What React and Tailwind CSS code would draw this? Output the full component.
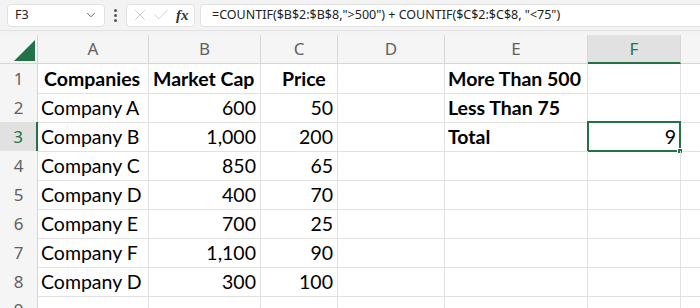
import React from "react";
import { ChevronDown, X, Check } from "lucide-react";

const cols = ["A", "B", "C", "D", "E", "F"];

const rows = [
  ["Companies", "Market Cap", "Price", "", "More Than 500", ""],
  ["Company A", "600", "50", "", "Less Than 75", ""],
  ["Company B", "1,000", "200", "", "Total", "9"],
  ["Company C", "850", "65", "", "", ""],
  ["Company D", "400", "70", "", "", ""],
  ["Company E", "700", "25", "", "", ""],
  ["Company F", "1,100", "90", "", "", ""],
  ["Company D", "300", "100", "", "", ""],
  ["", "", "", "", "", ""],
];

const gridCols = "grid grid-cols-[38px_111px_112px_77px_107px_143px_93px_1fr]";
const cellFont = { fontFamily: "Lato, 'Open Sans', sans-serif" };
const uiFont = { fontFamily: "'Noto Sans', 'Open Sans', sans-serif" };

const App = () => {
  return (
    <div className="w-[700px] h-[308px] overflow-hidden bg-white">
      {/* Formula bar */}
      <div className="h-[31px] bg-[#f3f3f3] flex items-center pl-[7px] gap-0 border-b border-[#e3e3e3]" style={uiFont}>
        <div className="w-[98px] h-[23px] bg-white border border-[#e1e1e1] rounded-[4px] flex items-center justify-between pl-[7px] pr-[6px]">
          <span className="text-[12.5px] text-[#222]">F3</span>
          <ChevronDown size={14} strokeWidth={1.6} className="text-[#555]" />
        </div>
        <div className="w-[21px] flex flex-col items-center justify-center gap-[2px]">
          <span className="w-[3px] h-[3px] rounded-full bg-[#555]"></span>
          <span className="w-[3px] h-[3px] rounded-full bg-[#555]"></span>
          <span className="w-[3px] h-[3px] rounded-full bg-[#555]"></span>
        </div>
        <div className="w-[69px] h-[23px] bg-white border border-[#e1e1e1] rounded-[4px] flex items-center pl-[4px] gap-[3px]">
          <X size={18} strokeWidth={1.1} className="text-[#c4c4c4]" />
          <Check size={18} strokeWidth={1.1} className="text-[#c4c4c4]" />
          <span className="ml-[3px] text-[15px] italic font-semibold text-[#333]" style={{ fontFamily: "'Liberation Serif', serif" }}>fx</span>
        </div>
        <div className="ml-[5px] flex-1 h-[23px] bg-white border border-[#e1e1e1] rounded-l-[4px] border-r-0 flex items-center pl-[11px]">
          <span className="text-[12.5px] text-[#222] whitespace-pre">=COUNTIF($B$2:$B$8,"&gt;500") + COUNTIF($C$2:$C$8, "&lt;75")</span>
        </div>
      </div>

      <div className="h-[4px] bg-[#f3f3f3]"></div>

      {/* Column headers */}
      <div className={`${gridCols} h-[29px] bg-[#f5f5f5] border-b border-[#d6d6d6]`} style={uiFont}>
        <div className="flex items-end justify-end pr-[2px] pb-[2px] border-r border-[#d6d6d6]">
          <svg width="21" height="21" viewBox="0 0 21 21">
            <polygon points="21,0 21,21 0,21" fill="#217346" />
          </svg>
        </div>
        {cols.map((c) => (
          <div
            key={c}
            className={
              c === "F"
                ? "flex items-center justify-center text-[17px] text-[#217346] bg-[#e1e1e1] border-r border-[#d6d6d6] border-b-2 border-b-[#217346] -mb-px"
                : "flex items-center justify-center text-[17px] text-[#616161] border-r border-[#d6d6d6]"
            }
          >
            {c}
          </div>
        ))}
        <div></div>
      </div>

      {/* Rows */}
      {rows.map((r, i) => {
        const n = i + 1;
        const sel = n === 3;
        return (
          <div key={n} className={`${gridCols} h-[29px]`}>
            <div
              className={
                sel
                  ? "flex items-center justify-center text-[17px] text-[#217346] bg-[#e1e1e1] border-b border-[#d6d6d6] border-r-2 border-r-[#217346]"
                  : "flex items-center justify-center text-[17px] text-[#616161] bg-[#f5f5f5] border-b border-[#d6d6d6] border-r border-r-[#d6d6d6]"
              }
              style={uiFont}
            >
              {n}
            </div>
            {r.map((v, j) => {
              const bold = n === 1 || j === 4;
              const right = j > 0 && j !== 4 && n > 1;
              const isSel = sel && j === 5;
              return (
                <div
                  key={j}
                  className={`relative flex items-center border-r border-b border-[#e1e1e1] text-[19.5px] text-black ${
                    right ? "justify-end pr-[4px]" : n === 1 && j < 3 ? (j === 0 ? "pl-[6px]" : j === 2 ? "pl-[21px]" : "pl-[4px]") : "pl-[3px]"
                  } ${bold ? "font-bold" : ""}`}
                  style={cellFont}
                >
                  {v}
                  {isSel && (
                    <>
                      <div className="absolute -left-px -top-px -right-px -bottom-px border-2 border-[#217346]"></div>
                      <div className="absolute -right-[3px] -bottom-[3px] w-[6px] h-[6px] bg-[#217346] border border-white"></div>
                    </>
                  )}
                </div>
              );
            })}
            <div className="border-b border-[#e1e1e1]"></div>
          </div>
        );
      })}
    </div>
  );
};

export default App;
